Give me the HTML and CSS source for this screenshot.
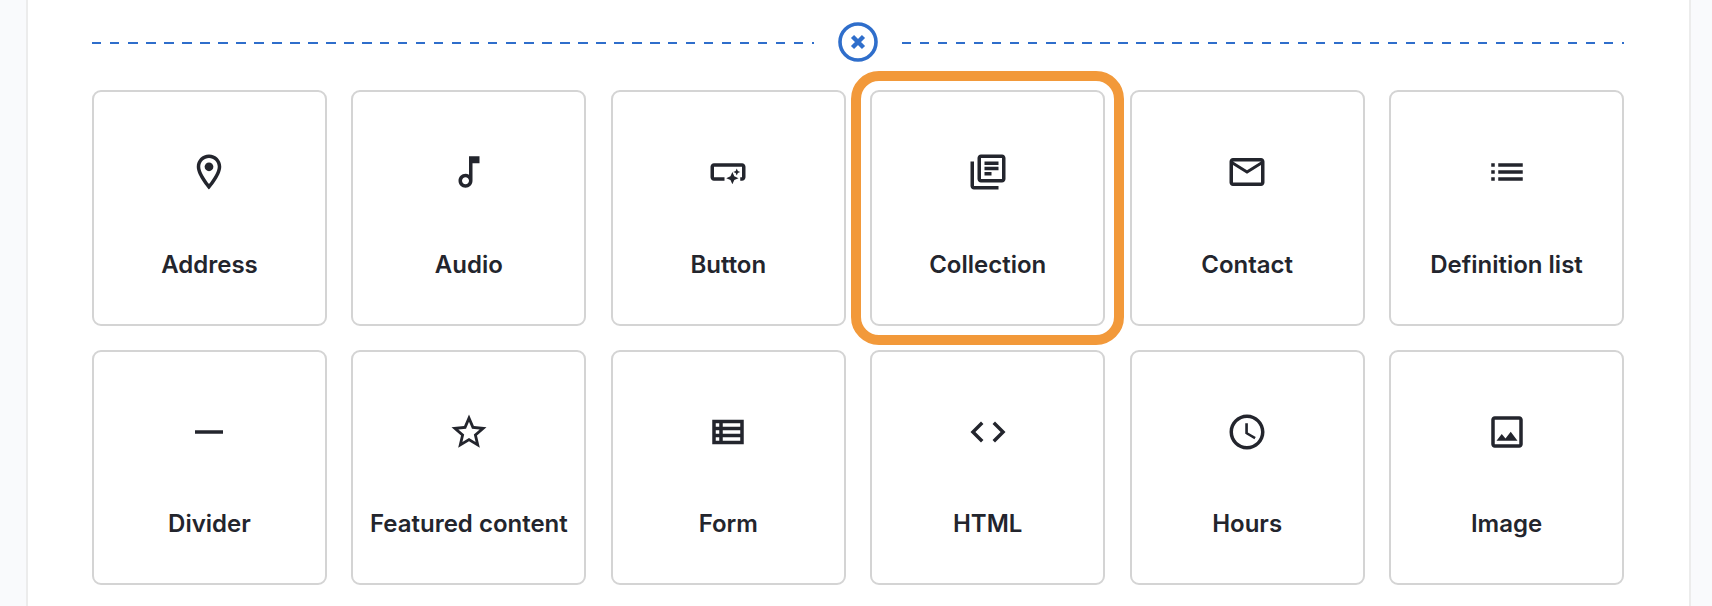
FILE: index.html
```html
<!DOCTYPE html>
<html lang="en">
<head>
    <meta charset="UTF-8">
    <meta name="viewport" content="width=device-width, initial-scale=1.0">
    <title>Choose a component</title>
    <link rel="stylesheet" href="styles.css">
</head>
<body>
    <main class="panel">
        <div class="insert-row">
            <span class="dashed-line"></span>
            <button class="close-button" type="button" aria-label="Close">
                <svg width="40" height="40" viewBox="0 0 40 40">
                    <circle cx="20" cy="20" r="18" fill="none" stroke="currentColor" stroke-width="3.6"/>
                    <path d="M14.5 14.500l11 11M25.500 14.500l-11 11" fill="none" stroke="currentColor" stroke-width="4.400"/>
                </svg>
            </button>
            <span class="dashed-line"></span>
        </div>

        <div class="component-grid">
            <a class="component-card">
                <svg class="card-icon" viewBox="0 0 24 24"><path d="M12 2C8.13 2 5 5.13 5 9c0 5.25 7 13 7 13s7-7.75 7-13c0-3.87-3.13-7-7-7zM7 9c0-2.76 2.24-5 5-5s5 2.24 5 5c0 2.88-2.88 7.19-5 9.88C9.92 16.21 7 11.85 7 9z"/><circle cx="12" cy="9" r="2.5"/></svg>
                <span class="card-label">Address</span>
            </a>
            <a class="component-card">
                <svg class="card-icon" viewBox="0 0 24 24"><path d="M12 3l.01 10.55c-.59-.34-1.27-.55-2-.55C7.79 13 6 14.79 6 17s1.79 4 4 4 4-1.79 4-4V7h4V3h-6zm-1.99 16c-1.1 0-2-.9-2-2s.9-2 2-2 2 .9 2 2-.9 2-2 2z"/></svg>
                <span class="card-label">Audio</span>
            </a>
            <a class="component-card">
                <svg class="card-icon" viewBox="0 0 24 24"><path d="M22 9v6c0 1.1-.9 2-2 2h-1v-2h1V9H4v6h6v2H4c-1.1 0-2-.9-2-2V9c0-1.1.9-2 2-2h16c1.100 0 2 .9 2 2zm-7.500 10l1.090-2.410L18 15.500l-2.410-1.090L14.500 12l-1.090 2.410L11 15.500l2.410 1.090L14.500 19zm2.500-5l.62-1.380L19 12l-1.380-.62L17 10l-.62 1.380L15 12l1.380.62L17 14z"/></svg>
                <span class="card-label">Button</span>
            </a>
            <a class="component-card is-highlighted">
                <svg class="card-icon" viewBox="0 0 24 24"><path d="M4 6H2v14c0 1.100.9 2 2 2h14v-2H4V6zm16-4H8c-1.100 0-2 .9-2 2v12c0 1.100.9 2 2 2h12c1.100 0 2-.9 2-2V4c0-1.100-.9-2-2-2zm0 14H8V4h12v12zM10 9h8v2h-8zm0 3h4v2h-4zm0-6h8v2h-8z"/></svg>
                <span class="card-label">Collection</span>
            </a>
            <a class="component-card">
                <svg class="card-icon" viewBox="0 0 24 24"><path d="M20 4H4c-1.100 0-1.990.9-1.990 2L2 18c0 1.100.9 2 2 2h16c1.100 0 2-.9 2-2V6c0-1.100-.9-2-2-2zm0 14H4V8l8 5 8-5v10zm-8-7L4 6h16l-8 5z"/></svg>
                <span class="card-label">Contact</span>
            </a>
            <a class="component-card">
                <svg class="card-icon" viewBox="0 0 24 24"><path d="M3 13h2v-2H3v2zm0 4h2v-2H3v2zm0-8h2V7H3v2zm4 4h14v-2H7v2zm0 4h14v-2H7v2zM7 7v2h14V7H7z"/></svg>
                <span class="card-label">Definition list</span>
            </a>
            <a class="component-card">
                <svg class="card-icon" viewBox="0 0 24 24"><path d="M4 11h16v2H4z"/></svg>
                <span class="card-label">Divider</span>
            </a>
            <a class="component-card">
                <svg class="card-icon" viewBox="0 0 24 24"><path d="M22 9.240l-7.190-.62L12 2 9.190 8.630 2 9.240l5.460 4.730L5.820 21 12 17.270 18.180 21l-1.630-7.030L22 9.240zM12 15.400l-3.760 2.270 1-4.280-3.320-2.880 4.380-.38L12 6.100l1.710 4.040 4.380.38-3.320 2.880 1 4.280L12 15.400z"/></svg>
                <span class="card-label">Featured content</span>
            </a>
            <a class="component-card">
                <svg class="card-icon" viewBox="0 0 24 24"><path d="M3 5v14h18V5H3zm4 2v2H5V7h2zm-2 6v-2h2v2H5zm0 2h2v2H5v-2zm14 2H9v-2h10v2zm0-4H9v-2h10v2zm0-4H9V7h10v2z"/></svg>
                <span class="card-label">Form</span>
            </a>
            <a class="component-card">
                <svg class="card-icon" viewBox="0 0 24 24"><path d="M9.400 16.600L4.800 12l4.600-4.600L8 6l-6 6 6 6 1.400-1.400zm5.200 0l4.600-4.600-4.600-4.600L16 6l6 6-6 6-1.400-1.400z"/></svg>
                <span class="card-label">HTML</span>
            </a>
            <a class="component-card">
                <svg class="card-icon" viewBox="0 0 24 24"><path d="M11.990 2C6.470 2 2 6.480 2 12s4.470 10 9.990 10C17.520 22 22 17.520 22 12S17.520 2 11.990 2zM12 20c-4.420 0-8-3.580-8-8s3.580-8 8-8 8 3.580 8 8-3.580 8-8 8zm.5-13H11v6l5.250 3.150.75-1.230-4.500-2.670z"/></svg>
                <span class="card-label">Hours</span>
            </a>
            <a class="component-card">
                <svg class="card-icon" viewBox="0 0 24 24"><path d="M19 5v14H5V5h14m0-2H5c-1.100 0-2 .9-2 2v14c0 1.100.9 2 2 2h14c1.100 0 2-.9 2-2V5c0-1.100-.9-2-2-2zm-4.860 8.860l-3 3.870L9 13.140 6 17h12l-3.860-5.140z"/></svg>
                <span class="card-label">Image</span>
            </a>
        </div>
    </main>
</body>
</html>
```

FILE: styles.css
```css
body {
    margin: 0;
    font-family: Inter, "Liberation Sans", sans-serif;
    background-color: #f9fafc;
    color: #23252d;
}

.panel {
    box-sizing: border-box;
    height: 100vh;
    margin: 0 21px 0 26px;
    padding: 22px 65px 0 64px;
    background-color: white;
    border-left: 2px solid #ececec;
    border-right: 2px solid #ececec;
}

.insert-row {
    display: flex;
    align-items: center;
    gap: 24px;
    margin-bottom: 28px;
}

.dashed-line {
    flex: 1;
    height: 2px;
    margin-top: 2px;
    background-image: repeating-linear-gradient(to right, #2f6ecb 0, #2f6ecb 9.5px, transparent 9.5px, transparent 18px);
}

.close-button {
    display: block;
    width: 40px;
    height: 40px;
    padding: 0;
    border: none;
    background: none;
    color: #2f6ecb;
    cursor: pointer;
}

.close-button svg {
    display: block;
}

.component-grid {
    display: grid;
    grid-template-columns: repeat(6, 1fr);
    gap: 24px 24.5px;
}

.component-card {
    box-sizing: border-box;
    display: flex;
    flex-direction: column;
    align-items: center;
    height: 235.5px;
    padding-top: 59px;
    border: 2px solid #d4d4d4;
    border-radius: 9px;
    background-color: white;
    cursor: pointer;
}

.component-card.is-highlighted {
    outline: 10px solid #f2993a;
    outline-offset: 9px;
}

.card-icon {
    width: 42px;
    height: 42px;
    fill: currentColor;
}

.card-label {
    margin-top: 56.5px;
    font-size: 24px;
    font-weight: 600;
    line-height: 30px;
    white-space: nowrap;
}
```
